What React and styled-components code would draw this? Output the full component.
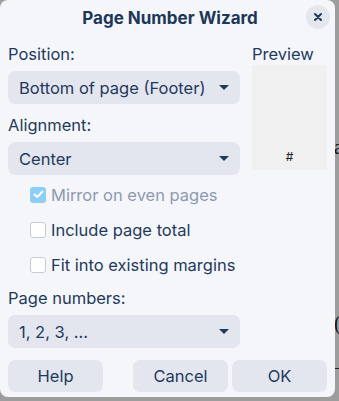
import React from "react";
import styled, { createGlobalStyle } from "styled-components";

const GlobalStyle = createGlobalStyle`
  html, body {
    margin: 0;
    padding: 0;
    background: #9d9d9d;
    font-family: Inter, "Noto Sans", sans-serif;
    overflow: hidden;
  }
`;

const Stage = styled.div`
  position: relative;
  width: 339px;
  height: 401px;
`;

// bits of the document behind the dialog, showing at the right edge
const BackdropText = styled.span`
  position: absolute;
  left: ${(p) => p.$x}px;
  top: ${(p) => p.$y}px;
  font-family: "Liberation Serif", serif;
  font-size: 20px;
  color: #111;
`;

const BackdropLine = styled.div`
  position: absolute;
  left: 334px;
  top: 368px;
  width: 5px;
  height: 1px;
  background: #222;
`;

const Dialog = styled.div`
  position: relative;
  width: 335px;
  height: 397px;
  box-sizing: border-box;
  background: #f5f6fa;
  border-radius: 8px;
  padding: 0 8px;
  color: #1f3a5c;
  display: flex;
  flex-direction: column;
`;

const Header = styled.div`
  height: 36px;
  display: flex;
  align-items: center;
  justify-content: center;
  position: relative;
`;

const Title = styled.h1`
  margin: 0;
  font-size: 17px;
  font-weight: 700;
  color: #1c3758;
  padding-left: 5px;
`;

const CloseButton = styled.button`
  position: absolute;
  right: -3px;
  top: 5px;
  width: 24px;
  height: 24px;
  border-radius: 50%;
  border: none;
  background: #e4e7ee;
  display: flex;
  align-items: center;
  justify-content: center;
  padding: 0;
`;

const Body = styled.div`
  display: grid;
  grid-template-columns: 232px 75px;
  column-gap: 12px;
`;

const Column = styled.div`
  display: flex;
  flex-direction: column;
  margin-top: ${(p) => p.$top || 0}px;
`;

const Label = styled.div`
  font-size: 16.5px;
  line-height: 20px;
  margin-top: ${(p) => p.$top || 0}px;
  margin-bottom: 7px;
`;

const Select = styled.div`
  height: 33px;
  border-radius: 7px;
  background: #e3e6ee;
  display: flex;
  align-items: center;
  justify-content: space-between;
  padding: 0 11px;
  font-size: 16.5px;
  box-sizing: border-box;
`;

const Caret = styled.span`
  width: 0;
  height: 0;
  border-left: 5px solid transparent;
  border-right: 5px solid transparent;
  border-top: 5px solid #1f3a5c;
`;

const CheckRow = styled.label`
  height: 35px;
  display: flex;
  align-items: center;
  gap: 5px;
  padding-left: 22px;
  font-size: 16.5px;
  color: ${(p) => (p.$disabled ? "#8d9ab0" : "#1f3a5c")};
`;

const Box = styled.span`
  width: 16px;
  height: 16px;
  box-sizing: border-box;
  border-radius: 3px;
  border: ${(p) => (p.$checked ? "none" : "1px solid #c6cbd6")};
  background: ${(p) => (p.$checked ? "#8dcdf6" : "#ffffff")};
  display: flex;
  align-items: center;
  justify-content: center;
  flex: none;
`;

const PreviewLabel = styled.div`
  font-size: 16.5px;
  line-height: 20px;
  margin-bottom: 1px;
`;

const PreviewPage = styled.div`
  height: 105px;
  background: #f0f0f0;
  display: flex;
  align-items: flex-end;
  justify-content: center;
  padding-bottom: 6px;
  box-sizing: border-box;
  font-size: 12px;
  color: #222;
`;

const Footer = styled.div`
  display: grid;
  grid-template-columns: 95px 1fr 95px 95px;
  column-gap: 4px;
  margin-top: 12px;
`;

const Button = styled.button`
  height: 32px;
  border: none;
  border-radius: 7px;
  background: #e3e6ee;
  font-family: inherit;
  font-size: 16.5px;
  color: #1f3a5c;
  grid-column: ${(p) => p.$col};
`;

const Check = () => (
  <svg width="11" height="9" viewBox="0 0 11 9">
    <path d="M1.5 4.5 L4.2 7 L9.5 1.5" stroke="#fff" strokeWidth="2" fill="none" strokeLinecap="round" strokeLinejoin="round" />
  </svg>
);

const CheckOption = ({ checked, disabled, children }) => (
  <CheckRow $disabled={disabled}>
    <Box $checked={checked}>{checked && <Check />}</Box>
    {children}
  </CheckRow>
);

export default function App() {
  return (
    <>
      <GlobalStyle />
      <Stage>
        <BackdropText $x={334} $y={136}>a</BackdropText>
        <BackdropText $x={334} $y={312}>(</BackdropText>
        <BackdropLine />
        <Dialog>
          <Header>
            <Title>Page Number Wizard</Title>
            <CloseButton>
              <svg width="10" height="10" viewBox="0 0 10 10">
                <path d="M2 2 L8 8 M8 2 L2 8" stroke="#1f3a5c" strokeWidth="2" strokeLinecap="round" />
              </svg>
            </CloseButton>
          </Header>
          <Body>
            <Column>
              <Label $top={8}>Position:</Label>
              <Select>
                Bottom of page (Footer) <Caret />
              </Select>
              <Label $top={11}>Alignment:</Label>
              <Select>
                Center <Caret />
              </Select>
              <Column $top={2}>
                <CheckOption checked disabled>Mirror on even pages</CheckOption>
                <CheckOption>Include page total</CheckOption>
                <CheckOption>Fit into existing margins</CheckOption>
              </Column>
              <Label $top={6}>Page numbers:</Label>
              <Select>
                1, 2, 3, ... <Caret />
              </Select>
            </Column>
            <Column $top={8}>
              <PreviewLabel>Preview</PreviewLabel>
              <PreviewPage>#</PreviewPage>
            </Column>
          </Body>
          <Footer>
            <Button $col={1}>Help</Button>
            <Button $col={3}>Cancel</Button>
            <Button $col={4}>OK</Button>
          </Footer>
        </Dialog>
      </Stage>
    </>
  );
}
